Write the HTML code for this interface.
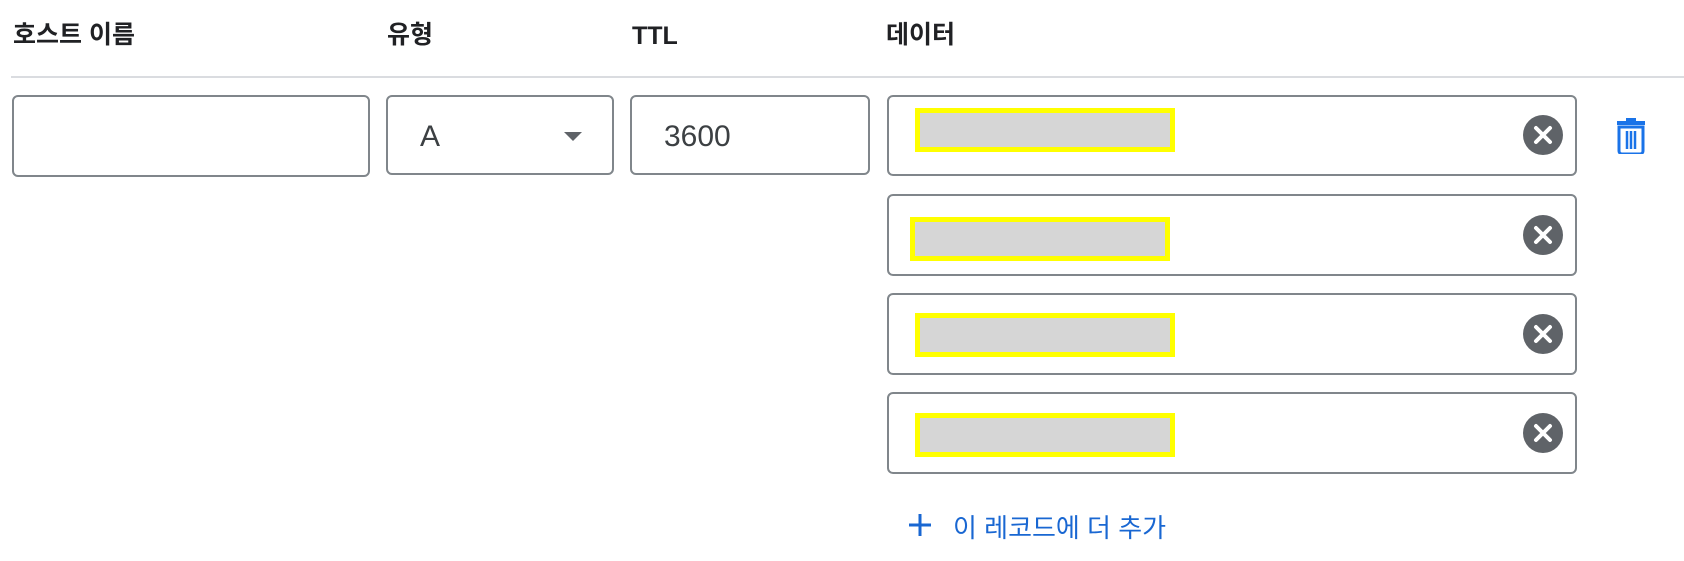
<!DOCTYPE html>
<html><head><meta charset="utf-8"><style>
body{margin:0;width:1684px;height:561px;background:#fff;font-family:"Liberation Sans","Noto Sans CJK KR",sans-serif;position:relative;overflow:hidden}
.h{position:absolute;top:20px;font-size:25px;line-height:30px;height:30px;font-weight:bold;color:#202124}
.div{position:absolute;left:11px;right:0;top:76px;height:2px;background:#dadce0}
.box{position:absolute;border:2px solid #80868b;border-radius:6px;box-sizing:border-box;background:#fff}
.t{position:absolute;font-size:30px;line-height:34px;color:#3c4043;top:23px}
.y{position:absolute;background:#d6d6d6;border:5px solid #ffff00;box-sizing:border-box;height:44px;width:260px}
.x{position:absolute;right:12px;top:18px;width:40px;height:40px}
</style></head><body>
<div class="h" style="left:13px">호스트 이름</div>
<div class="h" style="left:387px">유형</div>
<div class="h" style="left:632px;top:21px">TTL</div>
<div class="h" style="left:886px">데이터</div>
<div class="div"></div>
<div class="box" style="left:12px;top:95px;width:358px;height:82px"></div>
<div class="box" style="left:386px;top:95px;width:228px;height:80px"><span class="t" style="left:32px">A</span>
<div style="position:absolute;left:176px;top:35px;width:0;height:0;border-left:9px solid transparent;border-right:9px solid transparent;border-top:9px solid #5f6368"></div></div>
<div class="box" style="left:630px;top:95px;width:240px;height:80px"><span class="t" style="left:32px">3600</span></div>

<div class="box" style="left:887px;top:95px;width:690px;height:81px"><div class="y" style="left:26px;top:11px"></div><svg class="x" viewBox="0 0 40 40"><circle cx="20" cy="20" r="20" fill="#5f6368"/><path d="M13 13L27 27M27 13L13 27" stroke="#fff" stroke-width="4" stroke-linecap="round"/></svg></div>
<div class="box" style="left:887px;top:194px;width:690px;height:82px"><div class="y" style="left:21px;top:21px"></div><svg class="x" style="top:19px" viewBox="0 0 40 40"><circle cx="20" cy="20" r="20" fill="#5f6368"/><path d="M13 13L27 27M27 13L13 27" stroke="#fff" stroke-width="4" stroke-linecap="round"/></svg></div>
<div class="box" style="left:887px;top:293px;width:690px;height:82px"><div class="y" style="left:26px;top:18px"></div><svg class="x" style="top:19px" viewBox="0 0 40 40"><circle cx="20" cy="20" r="20" fill="#5f6368"/><path d="M13 13L27 27M27 13L13 27" stroke="#fff" stroke-width="4" stroke-linecap="round"/></svg></div>
<div class="box" style="left:887px;top:392px;width:690px;height:82px"><div class="y" style="left:26px;top:19px"></div><svg class="x" style="top:19px" viewBox="0 0 40 40"><circle cx="20" cy="20" r="20" fill="#5f6368"/><path d="M13 13L27 27M27 13L13 27" stroke="#fff" stroke-width="4" stroke-linecap="round"/></svg></div>

<svg style="position:absolute;left:1616px;top:116px" width="30" height="38" viewBox="0 0 30 38"><path d="M10 2h10v3h9v4H1V5h9z" fill="#1a73e8"/><path d="M3 11h24v24a3 3 0 0 1-3 3H6a3 3 0 0 1-3-3z" fill="none" stroke="#1a73e8" stroke-width="3"/><path d="M11 15v18M15 15v18M19 15v18" stroke="#1a73e8" stroke-width="2.5"/></svg>

<svg style="position:absolute;left:908px;top:513px" width="24" height="24" viewBox="0 0 24 24"><path d="M12 1v22M1 12h22" stroke="#1967d2" stroke-width="3"/></svg>
<div style="position:absolute;left:953px;top:508px;font-size:26px;color:#1967d2">이 레코드에 더 추가</div>
</body></html>
